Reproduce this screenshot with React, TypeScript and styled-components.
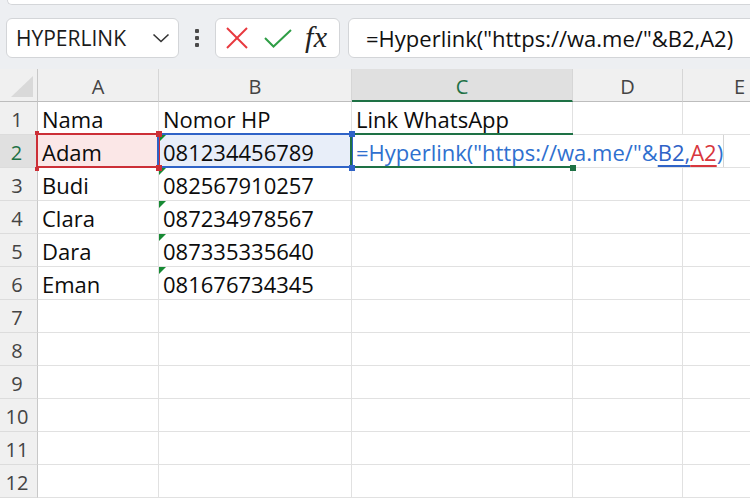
import React from 'react';
import styled, { createGlobalStyle } from 'styled-components';

const Global = createGlobalStyle`
  html, body { margin: 0; padding: 0; background: #ffffff; }
  body { font-family: "Open Sans", "Noto Sans", sans-serif; }
`;

const GREEN = '#1e7145';
const RED = '#cc2f37';
const BLUE = '#2f63c7';
const GRID = '#e1e1e1';

const Page = styled.div`
  width: 750px;
  height: 500px;
  overflow: hidden;
  display: flex;
  flex-direction: column;
  background: #fff;
`;

const TopArea = styled.div`
  height: 69px;
  flex: none;
  background: #edeff2;
  display: flex;
  flex-direction: column;
`;

const RibbonEdge = styled.div`
  height: 4px;
  margin-left: 7px;
  background: #fff;
  border-left: 1px solid #d4d6d9;
  border-bottom: 1px solid #d4d6d9;
  border-bottom-left-radius: 8px;
`;

const FormulaRow = styled.div`
  display: flex;
  align-items: center;
  padding: 13px 0 0 6px;
`;

const Box = styled.div`
  box-sizing: border-box;
  height: 40px;
  background: #fff;
  border: 1px solid #d3d5d8;
  border-radius: 6px;
  display: flex;
  align-items: center;
`;

const NameBox = styled(Box)`
  width: 173px;
  padding: 0 8px 0 9px;
  justify-content: space-between;
  font-size: 21px;
  color: #1b1b1b;
`;

const Dots = styled.div`
  width: 5px;
  margin: 0 15px 0 16px;
  display: flex;
  flex-direction: column;
  gap: 3px;
`;

const Dot = styled.span`
  width: 4px;
  height: 4px;
  border-radius: 1px;
  background: #4a4a4a;
`;

const FxBox = styled(Box)`
  width: 125px;
  padding: 0 0 0 10px;
`;

const IconSlot = styled.span<{ $w: number }>`
  width: ${p => p.$w}px;
  display: flex;
  align-items: center;
`;

const FxText = styled.span`
  font-family: "Liberation Serif", "DejaVu Serif", serif;
  font-style: italic;
  font-size: 30px;
  color: #222;
  line-height: 1;
  margin: -3px 0 0 -2px;
  letter-spacing: 0.5px;
`;

const FormulaInput = styled(Box)`
  flex: 1;
  margin-left: 8px;
  margin-right: -12px;
  padding-left: 17px;
  font-size: 22px;
  color: #111;
  white-space: nowrap;
`;

const Sheet = styled.div`
  display: grid;
  grid-template-columns: 38px 121px 193px 221px 110px 114px;
  grid-auto-rows: 33px;
  flex: 1;
`;

const Corner = styled.div`
  position: relative;
  box-sizing: border-box;
  background: #f0f0f0;
  border-right: 1px solid #c8c8c8;
  border-bottom: 1px solid #bdbdbd;
  display: flex;
  align-items: flex-end;
  justify-content: flex-end;
  padding: 0 4px 4px 0;
`;

const CornerTriangle = styled.div`
  width: 22px;
  height: 21px;
  background: #d9d9d9;
  clip-path: polygon(100% 0, 100% 100%, 0 100%);
`;

const ColHeader = styled.div<{ $active?: boolean }>`
  box-sizing: border-box;
  background: ${p => (p.$active ? '#e0e0e0' : '#f0f0f0')};
  color: ${p => (p.$active ? GREEN : '#444')};
  border-right: 1px solid #d6d6d6;
  border-bottom: ${p => (p.$active ? `2px solid ${GREEN}` : '1px solid #bdbdbd')};
  display: flex;
  align-items: center;
  justify-content: center;
  padding-top: ${p => (p.$active ? '3px' : '2px')};
  font-size: 20px;
`;

const RowHeader = styled.div<{ $active?: boolean }>`
  box-sizing: border-box;
  background: ${p => (p.$active ? '#e0e0e0' : '#f0f0f0')};
  color: ${p => (p.$active ? GREEN : '#444')};
  border-right: ${p => (p.$active ? `2px solid ${GREEN}` : '1px solid #c8c8c8')};
  border-bottom: 1px solid #dcdcdc;
  display: flex;
  align-items: center;
  justify-content: center;
  padding: 2px 3px 0 0;
  font-size: 20px;
`;

const Cell = styled.div<{ $fill?: string }>`
  position: relative;
  box-sizing: border-box;
  background: ${p => p.$fill || '#fff'};
  border-right: 1px solid ${GRID};
  border-bottom: 1px solid ${GRID};
  display: flex;
  align-items: center;
  padding: 2px 0 0 4px;
  font-size: 22px;
  color: #0c0c0c;
  white-space: nowrap;
`;

const EditCell = styled.div`
  position: relative;
  grid-column: span 3;
  box-sizing: border-box;
  border-bottom: 1px solid ${GRID};
  display: flex;
`;

const EditArea = styled.div`
  box-sizing: border-box;
  width: 372px;
  height: 100%;
  background: #fff;
  border-right: 1px solid #d4d4d4;
  display: flex;
  align-items: center;
  padding: 2px 0 0 4px;
  font-size: 22px;
  white-space: nowrap;
  color: #2f70cf;
`;

const RefToken = styled.span<{ $c: string }>`
  color: ${p => p.$c};
  text-decoration: underline;
  text-decoration-color: ${p => p.$c};
  text-underline-offset: 4px;
  text-decoration-thickness: 2px;
`;

const Frame = styled.div<{ $c: string; $noRight?: boolean; $w?: number }>`
  position: absolute;
  left: -2px;
  top: -2px;
  bottom: -1px;
  ${p => (p.$w ? `width: ${p.$w}px;` : 'right: -2px;')}
  box-sizing: border-box;
  border: 2px solid ${p => p.$c};
  ${p => (p.$noRight ? 'border-right: none;' : '')}
  z-index: 2;
  pointer-events: none;
`;

const Handle = styled.div<{ $c: string; $x: 'l' | 'r'; $y: 't' | 'b'; $s?: number; $left?: number }>`
  position: absolute;
  width: ${p => p.$s || 6}px;
  height: ${p => p.$s || 6}px;
  background: ${p => p.$c};
  ${p => (p.$left !== undefined ? `left: ${p.$left}px;` : p.$x === 'l' ? 'left: -3px;' : 'right: -4px;')}
  ${p => (p.$y === 't' ? 'top: -4px;' : 'bottom: -4px;')}
  z-index: 3;
`;

const ErrorFlag = styled.div`
  position: absolute;
  left: 0;
  top: 0;
  width: 7px;
  height: 7px;
  background: #178a34;
  clip-path: polygon(0 0, 100% 0, 0 100%);
  z-index: 1;
`;

const rows: [string, string][] = [
  ['Nama', 'Nomor HP'],
  ['Adam', '081234456789'],
  ['Budi', '082567910257'],
  ['Clara', '087234978567'],
  ['Dara', '087335335640'],
  ['Eman', '081676734345'],
];

const Chevron = () => (
  <svg width="18" height="10" viewBox="0 0 18 10">
    <polyline points="1.5,1.5 9,8.5 16.5,1.5" fill="none" stroke="#333" strokeWidth="1.6" />
  </svg>
);

const CancelIcon = () => (
  <svg width="22" height="22" viewBox="0 0 22 22">
    <line x1="1" y1="1" x2="21" y2="21" stroke="#e8383e" strokeWidth="2" />
    <line x1="21" y1="1" x2="1" y2="21" stroke="#e8383e" strokeWidth="2" />
  </svg>
);

const EnterIcon = () => (
  <svg width="28" height="19" viewBox="0 0 28 19">
    <polyline points="1,9 9.5,17.5 27,1" fill="none" stroke="#2f9e46" strokeWidth="2" />
  </svg>
);

export default function App() {
  const totalRows = 12;
  return (
    <Page>
      <Global />
      <TopArea>
        <RibbonEdge />
        <FormulaRow>
          <NameBox>
            <span>HYPERLINK</span>
            <Chevron />
          </NameBox>
          <Dots>
            <Dot />
            <Dot />
            <Dot />
          </Dots>
          <FxBox>
            <IconSlot $w={38}>
              <CancelIcon />
            </IconSlot>
            <IconSlot $w={43}>
              <EnterIcon />
            </IconSlot>
            <FxText>fx</FxText>
          </FxBox>
          <FormulaInput>=Hyperlink("https://wa.me/"&amp;B2,A2)</FormulaInput>
        </FormulaRow>
      </TopArea>
      <Sheet>
        <Corner>
          <CornerTriangle />
        </Corner>
        <ColHeader>A</ColHeader>
        <ColHeader>B</ColHeader>
        <ColHeader $active>C</ColHeader>
        <ColHeader>D</ColHeader>
        <ColHeader>E</ColHeader>
        {Array.from({ length: totalRows }, (_, i) => {
          const r = i + 1;
          const data = rows[i];
          if (r === 2) {
            return (
              <React.Fragment key={r}>
                <RowHeader $active>{r}</RowHeader>
                <Cell $fill="#fbe7e7">
                  {data[0]}
                  <Frame $c={RED} />
                  <Handle $c={RED} $x="l" $y="t" $s={4} />
                  <Handle $c={RED} $x="r" $y="t" />
                  <Handle $c={RED} $x="l" $y="b" $s={4} />
                  <Handle $c={RED} $x="r" $y="b" />
                </Cell>
                <Cell $fill="#e8eef9">
                  <ErrorFlag />
                  {data[1]}
                  <Frame $c={BLUE} />
                  <Handle $c={BLUE} $x="r" $y="t" />
                  <Handle $c={BLUE} $x="r" $y="b" />
                </Cell>
                <EditCell>
                  <EditArea>
                    =Hyperlink("https://wa.me/"&amp;
                    <RefToken $c={BLUE}>B2,</RefToken>
                    <RefToken $c="#d8363d">A2</RefToken>)
                  </EditArea>
                  <Frame $c={GREEN} $noRight $w={223} />
                  <Handle $c={GREEN} $x="r" $y="b" $left={218} />
                </EditCell>
              </React.Fragment>
            );
          }
          return (
            <React.Fragment key={r}>
              <RowHeader>{r}</RowHeader>
              <Cell>{data ? data[0] : ''}</Cell>
              <Cell>
                {data && r > 1 && <ErrorFlag />}
                {data ? data[1] : ''}
              </Cell>
              <Cell>{r === 1 ? 'Link WhatsApp' : ''}</Cell>
              <Cell />
              <Cell />
            </React.Fragment>
          );
        })}
      </Sheet>
    </Page>
  );
}
